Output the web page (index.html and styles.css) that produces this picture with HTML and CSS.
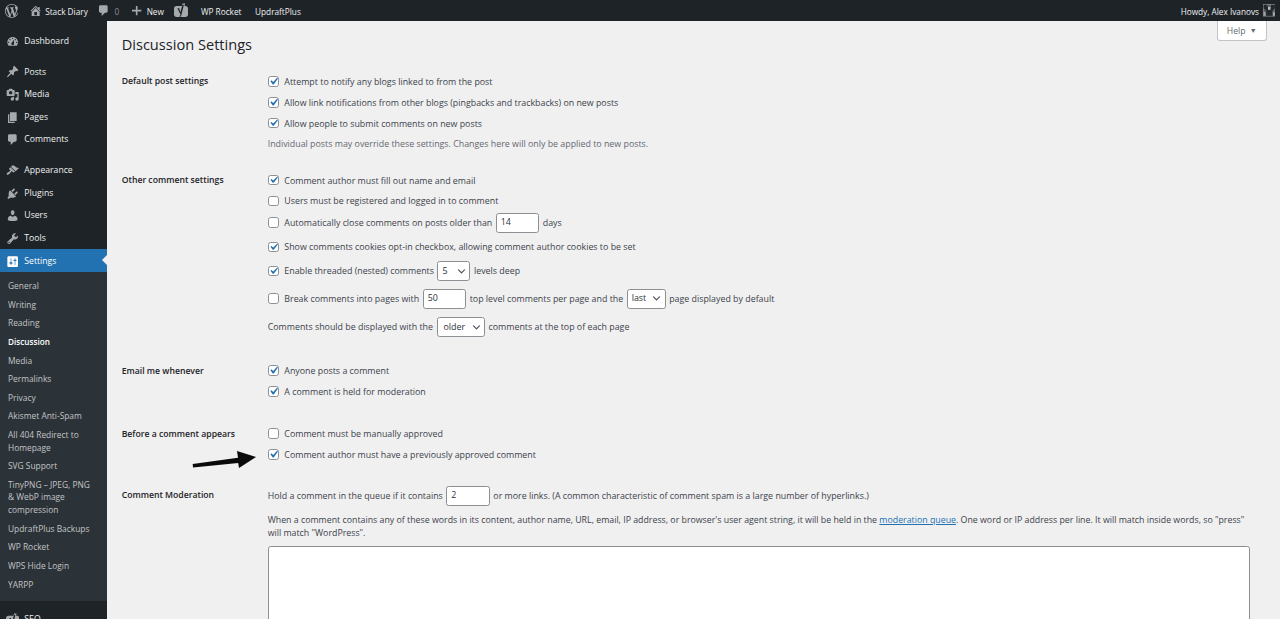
FILE: index.html
```html
<!DOCTYPE html>
<html lang="en">
<head>
<meta charset="utf-8">
<title>Discussion Settings</title>
<link rel="stylesheet" href="styles.css">
</head>
<body>
<header class="adminbar">
  <div class="bar-left">
    <svg class="ab-wp" viewBox="0 0 20 20"><path d="M20 10c0-5.51-4.49-10-10-10C4.48 0 0 4.49 0 10c0 5.52 4.48 10 10 10 5.51 0 10-4.48 10-10zM7.78 15.37L4.37 6.22c.55-.02 1.17-.08 1.17-.08.5-.06.44-1.13-.06-1.11 0 0-1.45.11-2.37.11-.18 0-.37 0-.58-.01C4.12 2.69 6.87 1.11 10 1.11c2.33 0 4.45.87 6.05 2.34-.68-.11-1.65.39-1.65 1.58 0 .74.45 1.36.9 2.1.35.61.55 1.36.55 2.46 0 1.49-1.4 5-1.4 5l-3.03-8.37c.54-.02.82-.17.82-.17.5-.05.44-1.25-.06-1.22 0 0-1.44.12-2.38.12-.87 0-2.33-.12-2.33-.12-.5-.03-.56 1.2-.06 1.22l.92.08 1.26 3.41zM17.41 10c.24-.64.74-1.87.43-4.25.7 1.29 1.05 2.71 1.05 4.25 0 3.29-1.73 6.24-4.4 7.78.97-2.59 1.94-5.2 2.92-7.78zM6.1 18.09C3.12 16.65 1.11 13.53 1.11 10c0-1.3.23-2.48.72-3.59C3.25 10.3 4.67 14.2 6.1 18.09zm4.03-6.63l2.58 6.98c-.86.29-1.76.45-2.71.45-.79 0-1.57-.11-2.29-.33.81-2.38 1.62-4.74 2.42-7.1z"/></svg>
    <span class="ab-item ab-site"><svg class="ab-ic" viewBox="0 0 20 20"><path d="M16 8.5l1.53 1.53-1.06 1.06L10 4.62l-6.47 6.47-1.06-1.06L10 2.5l4 4v-2h2v4zm-6-2.46l6 5.99V18H4v-5.97zM12 17v-5H8v5h4z"/></svg>Stack Diary</span>
    <span class="ab-item ab-comments"><svg class="ab-ic" viewBox="0 0 20 20"><path d="M5 2h9c1.1 0 2 .9 2 2v7c0 1.1-.9 2-2 2h-2l-5 5v-5H5c-1.1 0-2-.9-2-2V4c0-1.1.9-2 2-2z"/></svg><span class="ab-dim">0</span></span>
    <span class="ab-item ab-new"><svg class="ab-ic" viewBox="0 0 20 20"><path d="M17 8.800v2.400h-5.800V17H8.800v-5.800H3V8.800h5.800V3h2.400v5.800z"/></svg>New</span>
    <svg class="ab-yoast" viewBox="0 0 14 14"><path d="M2.500 3h9c1.400 0 2.500 1 2.500 2.500v6c0 1.400-1.100 2.500-2.500 2.500h-9C1.100 14 0 12.900 0 11.500v-6C0 4 1.100 3 2.500 3z"/><path d="M8.500 0.500h2.700L7.500 13H5.200z"/><path class="yoast-y" d="M3.400 5.300h1.800l1.200 4 2-7.500h1.500L7.200 12.800c-.2.700-.6 1-1.300 1.200l-.4-.9c.4-.1.600-.3.700-.6l.3-1.100z"/></svg>
    <span class="ab-item ab-rocket">WP Rocket</span>
    <span class="ab-item">UpdraftPlus</span>
  </div>
  <div class="bar-right">
    <span class="howdy">Howdy, Alex Ivanovs</span>
    <svg class="avatar" viewBox="0 0 12 12"><rect width="12" height="12" fill="#8b8f92"/><rect x=".6" y=".6" width="10.800" height="10.800" fill="#5f6468"/><path d="M.6 .6h3.400l1 3.500h2l1-3.500h3.400v3.400L9 6.500v4.900H3V6.500L.6 4z" fill="#23282b"/><path d="M4.800 2.800h2.400v2.800H4.800z" fill="#b8babc"/><path d="M.6 8h1.800v3.400H.6zM9.600 8h1.800v3.400H9.600z" fill="#a5a8aa"/></svg>
  </div>
</header>

<div class="layout">
  <nav class="sidebar">
    <ul class="menu first">
      <li class="m"><svg viewBox="0 0 20 20"><path fill-rule="evenodd" d="M3.760 16h12.480c1.100-1.370 1.760-3.110 1.760-5 0-4.420-3.580-8-8-8s-8 3.580-8 8c0 1.890.66 3.630 1.760 5zM10 4c.55 0 1 .45 1 1s-.45 1-1 1-1-.45-1-1 .45-1 1-1zM6 6c.55 0 1 .45 1 1s-.45 1-1 1-1-.45-1-1 .45-1 1-1zm8 0c.55 0 1 .45 1 1s-.45 1-1 1-1-.45-1-1 .45-1 1-1zm-5.370 5.550L12 7v6c0 1.100-.9 2-2 2s-2-.9-2-2c0-.57.24-1.080.63-1.450zM4 10c.55 0 1 .45 1 1s-.45 1-1 1-1-.45-1-1 .45-1 1-1zm12 0c.55 0 1 .45 1 1s-.45 1-1 1-1-.45-1-1 .45-1 1-1z"/></svg>Dashboard</li>
    </ul>
    <ul class="menu">
      <li class="m"><svg viewBox="0 0 20 20"><path d="M10.440 3.020l1.820-1.820 6.360 6.350-1.830 1.820c-1.050-.68-2.480-.57-3.410.36l-.75.75c-.92.93-1.040 2.350-.35 3.410l-1.830 1.820-2.410-2.410-2.800 2.790c-.42.42-3.380 2.710-3.800 2.290s1.860-3.390 2.280-3.810l2.790-2.790L4.100 9.360l1.830-1.820c1.050.69 2.480.57 3.400-.36l.75-.75c.93-.92 1.050-2.350.36-3.410z"/></svg>Posts</li>
      <li class="m"><svg viewBox="0 0 20 20"><path fill-rule="evenodd" d="M13 11V4c0-.55-.45-1-1-1h-1.670L9 1H5L3.670 3H2c-.55 0-1 .45-1 1v7c0 .55.45 1 1 1h10c.55 0 1-.45 1-1zM7 4.500c1.380 0 2.500 1.120 2.500 2.500S8.380 9.500 7 9.500 4.500 8.380 4.500 7 5.620 4.500 7 4.500zM14 6h5v10.500c0 1.380-1.120 2.500-2.500 2.500S14 17.880 14 16.500s1.120-2.500 2.500-2.500c.17 0 .34.02.5.05V9h-3V6zm-4 8.050V13h2v3.500c0 1.380-1.120 2.500-2.500 2.500S7 17.880 7 16.500 8.120 14 9.500 14c.17 0 .34.02.5.05z"/></svg>Media</li>
      <li class="m"><svg viewBox="0 0 20 20"><path d="M6 15V2h10v13H6zm-1 1h8v2H3V5h2v11z"/></svg>Pages</li>
      <li class="m"><svg viewBox="0 0 20 20"><path d="M5 2h9c1.100 0 2 .9 2 2v7c0 1.100-.9 2-2 2h-2l-5 5v-5H5c-1.100 0-2-.9-2-2V4c0-1.100.9-2 2-2z"/></svg>Comments</li>
    </ul>
    <ul class="menu">
      <li class="m"><svg viewBox="0 0 20 20"><path d="M14.480 11.060L7.410 3.990l1.500-1.500c.5-.56 2.300-.47 3.510.32 1.210.8 1.430 1.280 2.910 2.100 1.180.64 2.450 1.260 4.450.85zm-.71.71L6.700 4.700 4.930 6.470c-.39.39-.39 1.020 0 1.410l1.060 1.060c.39.39.39 1.030 0 1.420-.6.6-1.430 1.110-2.210 1.690-.35.26-.7.53-1.010.84C1.430 13.230.4 14.890 1.400 15.890c1 1 2.660-.03 3.990-1.370.31-.31.58-.66.84-1.010.58-.78 1.090-1.610 1.690-2.210.39-.39 1.020-.39 1.410 0l1.060 1.060c.39.39 1.020.39 1.410 0z"/></svg>Appearance</li>
      <li class="m"><svg viewBox="0 0 20 20"><path d="M13.110 4.360L9.870 7.600 8 5.730l3.240-3.240c.35-.34 1.050-.2 1.560.32.52.51.66 1.210.31 1.550zm-8 1.770l.91-1.120 9.010 9.010-1.190.84c-.71.71-2.630 1.160-3.820 1.160H6.140L4.900 17.260c-.59.59-1.540.59-2.120 0-.59-.58-.59-1.530 0-2.120l1.240-1.240v-3.880c0-1.130.4-3.190 1.090-3.890zm7.260 3.970l3.240-3.240c.34-.35 1.040-.21 1.550.31.52.51.66 1.210.31 1.550l-3.240 3.250z"/></svg>Plugins</li>
      <li class="m"><svg viewBox="0 0 20 20"><path d="M10 9.250c-2.270 0-2.730-3.440-2.730-3.440C7 4.020 7.820 2 9.970 2c2.160 0 2.980 2.020 2.710 3.810 0 0-.41 3.440-2.680 3.440zm0 2.570L12.720 10c2.390 0 4.520 2.330 4.520 4.530v2.490s-3.650 1.130-7.240 1.130c-3.650 0-7.240-1.130-7.240-1.130v-2.490c0-2.250 1.940-4.480 4.470-4.480z"/></svg>Users</li>
      <li class="m"><svg viewBox="0 0 20 20"><path fill-rule="evenodd" d="M16.680 9.770c-1.340 1.340-3.300 1.670-4.950.99l-5.410 6.520c-.99.99-2.590.99-3.580 0s-.99-2.590 0-3.570l6.520-5.420c-.68-1.650-.35-3.610.99-4.950 1.280-1.280 3.120-1.620 4.720-1.060l-2.890 2.890 2.820 2.820 2.860-2.870c.53 1.580.18 3.390-1.080 4.650zM3.810 16.210c.4.39 1.040.39 1.430 0 .4-.4.4-1.040 0-1.430-.39-.4-1.030-.4-1.430 0-.39.39-.39 1.030 0 1.430z"/></svg>Tools</li>
      <li class="m current"><svg viewBox="0 0 20 20"><path fill-rule="evenodd" d="M18 16V4c0-1.100-.9-2-2-2H4c-1.100 0-2 .9-2 2v12c0 1.100.9 2 2 2h12c1.100 0 2-.9 2-2zM8 11h1c.55 0 1 .45 1 1s-.45 1-1 1H8v1.500c0 .28-.22.5-.5.5s-.5-.22-.5-.5V13H6c-.55 0-1-.45-1-1s.45-1 1-1h1V5.500c0-.28.22-.5.5-.5s.5.22.5.5V11zm5-2h-1c-.55 0-1-.45-1-1s.45-1 1-1h1V5.500c0-.28.22-.5.5-.5s.5.22.5.5V7h1c.55 0 1 .45 1 1s-.45 1-1 1h-1v5.500c0 .28-.22.5-.5.5s-.5-.22-.5-.5V9z"/></svg>Settings</li>
    </ul>
    <ul class="submenu">
      <li>General</li>
      <li>Writing</li>
      <li>Reading</li>
      <li class="on">Discussion</li>
      <li>Media</li>
      <li>Permalinks</li>
      <li>Privacy</li>
      <li>Akismet Anti-Spam</li>
      <li>All 404 Redirect to Homepage</li>
      <li>SVG Support</li>
      <li>TinyPNG – JPEG, PNG &amp; WebP image compression</li>
      <li>UpdraftPlus Backups</li>
      <li>WP Rocket</li>
      <li>WPS Hide Login</li>
      <li>YARPP</li>
    </ul>
    <ul class="menu seo">
      <li class="m"><svg viewBox="0 0 14 14"><path d="M2.500 3h9c1.400 0 2.500 1 2.500 2.500v6c0 1.400-1.100 2.500-2.500 2.500h-9C1.100 14 0 12.900 0 11.500v-6C0 4 1.100 3 2.500 3z"/><path d="M8.500 0.500h2.700L7.500 13H5.200z"/><path class="yoast-y" d="M3.400 5.300h1.800l1.200 4 2-7.500h1.500L7.200 12.800c-.2.700-.6 1-1.300 1.200l-.4-.9c.4-.1.600-.3.700-.6l.3-1.100z"/></svg><span class="seo-label">SEO</span></li>
    </ul>
  </nav>

  <main class="content">
    <button class="help" type="button">Help <span class="tri">▼</span></button>
    <h1>Discussion Settings</h1>
    <form class="settings">
      <section class="row r1">
        <h2>Default post settings</h2>
        <div class="field">
          <label class="line"><input type="checkbox" checked>Attempt to notify any blogs linked to from the post</label>
          <label class="line"><input type="checkbox" checked>Allow link notifications from other blogs (pingbacks and trackbacks) on new posts</label>
          <label class="line"><input type="checkbox" checked>Allow people to submit comments on new posts</label>
          <p class="line desc">Individual posts may override these settings. Changes here will only be applied to new posts.</p>
        </div>
      </section>
      <section class="row r2">
        <h2>Other comment settings</h2>
        <div class="field">
          <label class="line"><input type="checkbox" checked>Comment author must fill out name and email</label>
          <label class="line"><input type="checkbox">Users must be registered and logged in to comment</label>
          <label class="line sp1"><input type="checkbox">Automatically close comments on posts older than <span class="num n1">14</span> days</label>
          <label class="line sp4"><input type="checkbox" checked>Show comments cookies opt-in checkbox, allowing comment author cookies to be set</label>
          <label class="line sp3"><input type="checkbox" checked>Enable threaded (nested) comments <span class="sel s1">5</span> levels deep</label>
          <label class="line sp7"><input type="checkbox">Break comments into pages with <span class="num n1">50</span> top level comments per page and the <span class="sel s2">last</span> page displayed by default</label>
          <label class="line sp8">Comments should be displayed with the <span class="sel s3">older</span> comments at the top of each page</label>
        </div>
      </section>
      <section class="row r3">
        <h2>Email me whenever</h2>
        <div class="field">
          <label class="line"><input type="checkbox" checked>Anyone posts a comment</label>
          <label class="line"><input type="checkbox" checked>A comment is held for moderation</label>
        </div>
      </section>
      <section class="row r4">
        <h2>Before a comment appears</h2>
        <div class="field">
          <label class="line"><input type="checkbox">Comment must be manually approved</label>
          <label class="line"><input type="checkbox" checked>Comment author must have a previously approved comment</label>
        </div>
      </section>
      <section class="row">
        <h2>Comment Moderation</h2>
        <div class="field">
          <label class="line">Hold a comment in the queue if it contains <span class="num n1">2</span> or more links. (A common characteristic of comment spam is a large number of hyperlinks.)</label>
          <p class="para">When a comment contains any of these words in its content, author name, URL, email, IP address, or browser's user agent string, it will be held in the <a href="#">moderation queue</a>. One word or IP address per line. It will match inside words, so "press" will match "WordPress".</p>
          <div class="textarea"></div>
        </div>
      </section>
    </form>
    <svg class="arrow" viewBox="0 0 66 20"><path d="M.7 15L46 8.700 45 2l19 6-17 11-.8-5L1 18.500z" fill="#0a0a0a"/></svg>
  </main>
</div>
</body>
</html>
```

FILE: styles.css
```css
* { box-sizing: border-box; }
html, body { margin: 0; padding: 0; height: 619px; overflow: hidden; }
body {
  background: #f0f0f1;
  color: #3c434a;
  font-family: "Open Sans", "Liberation Sans", sans-serif;
  font-size: 8.67px;
  line-height: 13px;
}
ul { list-style: none; margin: 0; padding: 0; }

.adminbar {
  height: 21.33px;
  background: #1d2327;
  color: #f0f0f1;
  display: flex;
  justify-content: space-between;
  align-items: center;
  font-size: 8.25px;
}
.bar-left { display: flex; align-items: center; padding-left: 4.500px; }
.ab-wp { width: 13.800px; height: 13.800px; fill: #a7aaad; margin-right: 10.500px; }
.ab-item { display: flex; align-items: center; padding-top: 1.400px; }
.ab-ic { width: 13.33px; height: 13.33px; fill: #a7aaad; margin: -1.400px 3px 0 0; }
.ab-site { margin-right: 9.500px; }
.ab-comments { margin-right: 11px; }
.ab-comments .ab-ic { margin-right: 4px; }
.ab-dim { color: #8c8f94; }
.ab-new { margin-right: 10px; }
.ab-yoast { width: 14px; height: 14px; fill: #a7aaad; margin: -1px 13px 0 0; }
.yoast-y { fill: #1d2327; }
.ab-rocket { margin-right: 13.500px; }
.bar-right { display: flex; align-items: center; padding-right: 5px; }
.howdy { margin-right: 3.500px; padding-top: 1.400px; }
.avatar { width: 12.500px; height: 12.500px; }

.layout { display: flex; height: 597.67px; }
.sidebar { width: 106.67px; flex: none; background: #1d2327; color: #f0f0f1; }
.menu { padding-top: 8px; }
.m {
  height: 22.67px;
  display: flex;
  align-items: center;
  padding: 1.400px 0 0 5.500px;
}
.m svg { width: 13.33px; height: 13.33px; fill: #a7aaad; margin-right: 5.500px; flex: none; }
.m .yoast-y { fill: #1d2327; }
.current { background: #2271b1; color: #fff; position: relative; }
.current svg { fill: #fff; }
.current::after {
  content: "";
  position: absolute;
  right: 0;
  top: 6px;
  border: 5.330px solid transparent;
  border-left-width: 0;
  border-right-color: #f0f0f1;
}
.submenu { background: #2c3338; color: #c3c4c7; padding: 5.100px 0 7.100px; font-size: 8.4px; }
.submenu li { padding: 3.030px 14px 3.030px 8px; line-height: 12.600px; }
.submenu .on { color: #fff; font-weight: 600; font-size: 8.2px; }
.seo { padding-top: 6px; }

.content { flex: 1; position: relative; padding: 0 30px 0 15px; min-width: 0; }
h1 {
  margin: 0;
  font-size: 14.6px;
  font-weight: 400;
  line-height: 20px;
  color: #1d2327;
  padding-top: 12.500px;
}
.help {
  position: absolute;
  top: 0;
  right: 13px;
  width: 50.500px;
  height: 20px;
  padding: 0;
  font: inherit;
  color: #646970;
  background: #fff;
  border: 1px solid #c3c4c7;
  border-top: 0;
  border-radius: 0 0 3px 3px;
}
.tri { font-size: 7px; margin-left: 2px; vertical-align: 1px; }

.settings { padding-top: 17.500px; }
.row { display: flex; align-items: flex-start; }
.row h2 {
  width: 146px;
  flex: none;
  margin: 0;
  font-size: 8.67px;
  font-weight: 600;
  line-height: 20.800px;
  color: #1d2327;
}
.field { flex: 1; min-width: 0; font-size: 8.85px; }
.line {
  display: flex;
  align-items: center;
  height: 20.800px;
  margin: 0;
  padding-top: 1.400px;
  white-space: nowrap;
}
.desc { color: #646970; }
.r1 { margin-bottom: 15.500px; }
.r2 { margin-bottom: 23.200px; }
.r3 { margin-bottom: 21.200px; }
.r4 { margin-bottom: 20.200px; }
.sp1 { margin-top: .700px; }
.sp4 { margin-top: 3.700px; }
.sp3 { margin-top: 3.200px; }
.sp7 { margin-top: 6.700px; }
.sp8 { margin-top: 7.700px; }

input[type="checkbox"] {
  appearance: none;
  width: 10.67px;
  height: 10.67px;
  flex: none;
  margin: -2px 5.500px 0 .500px;
  background: #fff;
  border: 1px solid #8c8f94;
  border-radius: 2.670px;
  background-position: center;
  background-repeat: no-repeat;
}
input[type="checkbox"]:checked {
  background-image: url("data:image/svg+xml,%3Csvg xmlns='http://www.w3.org/2000/svg' viewBox='0 0 20 20'%3E%3Cpath d='M14.830 4.890l1.340.94-5.810 8.380H9.020L5.780 9.670l1.340-1.250 2.570 2.400z' fill='%232271b1'/%3E%3C/svg%3E");
  background-size: 14px 14px;
}
.num, .sel {
  display: inline-flex;
  align-items: center;
  height: 20px;
  background: #fff;
  border: 1px solid #8c8f94;
  border-radius: 2.670px;
  color: #2c3338;
  margin: -1.400px 3.500px 0;
  padding-left: 4px;
  flex: none;
}
.n1 { width: 43.500px; }
.sel {
  background-image: url("data:image/svg+xml,%3Csvg xmlns='http://www.w3.org/2000/svg' viewBox='0 0 20 20'%3E%3Cpath d='M5 6l5 5 5-5 2 1-7 7-7-7z' fill='%2350575e'/%3E%3C/svg%3E");
  background-repeat: no-repeat;
  background-position: right 3px center;
  background-size: 10.500px 10.500px;
}
.s1 { width: 33px; }
.s2 { width: 39px; }
.s3 { width: 48.500px; padding-left: 6px; }
.para { margin: 0; padding-top: 7.500px; line-height: 13px; height: 39.700px; font-size: 8.8px; }
.para a { color: #2271b1; }
.textarea { height: 120px; width: 982px; background: #fff; border: 1px solid #8c8f94; border-radius: 2.670px; }
.arrow { position: absolute; left: 85px; top: 427.700px; width: 66px; height: 20px; }
```
